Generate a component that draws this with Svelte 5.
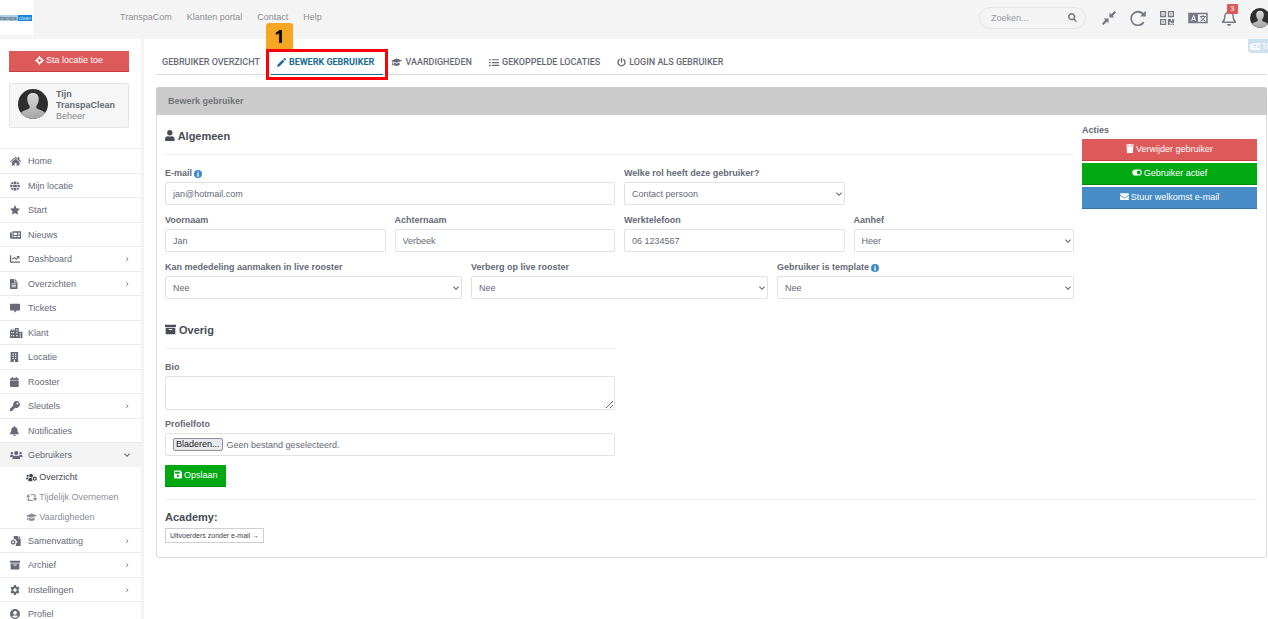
<script>
    // Icons: [viewBox width, viewBox height, path]
    const icons = {
        crosshair: [16, 16, 'M7 0h2v2.100A6 6 0 0 1 13.900 7H16v2h-2.100A6 6 0 0 1 9 13.900V16H7v-2.100A6 6 0 0 1 2.100 9H0V7h2.100A6 6 0 0 1 7 2.100zM8 5.500a2.500 2.500 0 1 0 0 5a2.500 2.500 0 0 0 0-5z'],
        home: [18, 16, 'M9 1L0 8.600l1 1.200L9 3.200l8 6.600l1-1.200l-3-2.500V1.500h-2.300v2.700zM9 4.500L3 9.500V15h4.500v-4h3v4H15V9.500z'],
        globe: [16, 16, 'M5.300 5.300h5.400C10.200 2 9 .3 8 .3S5.800 2 5.300 5.300zM5.100 6.300a17 17 0 0 0 0 3.400h5.800a17 17 0 0 0 0-3.400zM11.700 5.300h3.600A7.800 7.800 0 0 0 10.200.600c.8 1.200 1.300 3 1.500 4.700zM4.300 5.300C4.500 3.600 5 1.800 5.800.600A7.800 7.800 0 0 0 .7 5.300zM15.600 6.300h-3.700a18 18 0 0 1 0 3.400h3.700a8 8 0 0 0 0-3.400zM4 6.300H.4a8 8 0 0 0 0 3.400H4a18 18 0 0 1 0-3.400zM5.300 10.700c.5 3.300 1.700 5 2.700 5s2.200-1.700 2.700-5zM11.700 10.700c-.2 1.700-.7 3.500-1.500 4.700a7.800 7.800 0 0 0 5.100-4.700zM.7 10.700a7.800 7.800 0 0 0 5.100 4.700c-.8-1.200-1.300-3-1.500-4.700z'],
        star: [16, 16, 'M8 0l2.400 5.200l5.600.7l-4.100 3.900l1 5.700L8 12.800l-4.900 2.700l1-5.700L0 5.900l5.600-.7z'],
        news: [18, 16, 'M4 2h14v12H2a2 2 0 0 1-2-2V4h3v8h1zM6 4.500v3.500h5V4.500zM12.500 4.500V6H16V4.500zM12.500 7v1.300H16V7zM6 9.500V11h4.500V9.500zM12 9.500V11h4V9.500z'],
        chart: [16, 16, 'M0 2h2v10h14v2H0zM10 3h5v5l-1.700-1.700L10 9.600L7 6.700l-2.500 2.500L3.200 8L7 4.200l3 3L12 5z'],
        file: [12, 16, 'M0 1a1 1 0 0 1 1-1h6v5h5v10a1 1 0 0 1-1 1H1a1 1 0 0 1-1-1zM8 0l4 4H8zM2.500 7v1.200h7V7zM2.500 9.500v1.200h7V9.500zM2.500 12v1.200h7V12z'],
        chat: [16, 16, 'M1.500 1h13A1.500 1.500 0 0 1 16 2.500v8a1.500 1.500 0 0 1-1.500 1.500H11l-4 3.500V12H1.500A1.500 1.500 0 0 1 0 10.500v-8A1.500 1.500 0 0 1 1.500 1z'],
        city: [20, 16, 'M0 4h2V1h1.500v3h2V1H7v3h1V0h6v6h5a1 1 0 0 1 1 1v9H0zM2 6.500v2h1.500v-2zM2 11v2h1.500v-2zM5 6.500v2h1.500v-2zM5 11v2h1.500v-2zM10 2v2h2V2zM10 6.500v2h2v-2zM10 11v2h2v-2zM15.500 8.500v2h2v-2zM15.500 12v2h2v-2z'],
        building: [14, 16, 'M1 0h12v15h1v1H8v-3.500H6V16H0v-1h1zM4 2.500v2h2v-2zM8 2.500v2h2v-2zM4 6v2h2V6zM8 6v2h2V6zM4 9.500v1.500h2V9.500zM8 9.500v1.500h2V9.500z'],
        calendar: [14, 16, 'M3 0h2v2h4V0h2v2h1.500A1.500 1.500 0 0 1 14 3.500V5H0V3.500A1.500 1.500 0 0 1 1.500 2H3zM0 6h14v8.500a1.500 1.500 0 0 1-1.500 1.500h-11A1.500 1.500 0 0 1 0 14.500z'],
        key: [16, 16, 'M10.500 0a5.500 5.500 0 1 1-1.600 10.800L7.500 12H6v2H4v2H0v-3.500l5.300-5.300A5.500 5.500 0 0 1 10.500 0zM12 2.500a1.500 1.500 0 1 0 0 3a1.500 1.500 0 0 0 0-3z'],
        bell: [14, 16, 'M7 0a1 1 0 0 1 1 1v.7c2.500.5 4 2.300 4 5.300c0 3 2 3.500 2 5v1H0v-1c0-1.500 2-2 2-5c0-3 1.500-4.800 4-5.300V1a1 1 0 0 1 1-1zM5 14h4a2 2 0 0 1-4 0z'],
        users: [20, 16, 'M3 3a2 2 0 1 1 0 4a2 2 0 0 1 0-4zM17 3a2 2 0 1 1 0 4a2 2 0 0 1 0-4zM10 1.500a3.300 3.300 0 1 1 0 6.600a3.300 3.300 0 0 1 0-6.600zM2 8h2.500l1 .5L4 11H0v-1a2 2 0 0 1 2-2zM18 8h-2.500l-1 .5L16 11h4v-1a2 2 0 0 0-2-2zM7 9h6a3 3 0 0 1 3 3v2.500H4V12a3 3 0 0 1 3-3z'],
        usersCog: [20, 16, 'M3 3a2 2 0 1 1 0 4a2 2 0 0 1 0-4zM9 1.500a3.300 3.300 0 1 1 0 6.600a3.300 3.300 0 0 1 0-6.600zM2 8h2.500L3 11H0v-1a2 2 0 0 1 2-2zM6.500 9H10l1 2l-.5 1.500l1.500 2H4V12a3 3 0 0 1 2.500-3zM14.500 6h2l.4 1.500l1.500-.4l1 1.700l-1 1.200l1 1.200l-1 1.700l-1.500-.4l-.4 1.500h-2l-.4-1.500l-1.500.4l-1-1.700l1-1.200l-1-1.200l1-1.700l1.500.4zM15.500 8.500a1.500 1.500 0 1 0 0 3a1.500 1.500 0 0 0 0-3z'],
        retweet: [20, 16, 'M4 2l4 4.500H5V12h6l2 2H3V6.500H0zM7 2h10v7.500h3L16 14l-4-4.500h3V4H9z'],
        grad: [20, 16, 'M10 1l10 3.800L10 8.600L3 6v3l.8 4H1.200L2 9V5.500L0 4.800zM5 8l5 2l5-2l.6 4.200c-1 1.200-3 1.800-5.600 1.800s-4.600-.6-5.600-1.800z'],
        fileCog: [18, 16, 'M6 0h7v4h4v12H9V14l1-1v-2l2-1.500L10 7l-1-2H6zM14 0l3 3h-3zM4 6h2l.4 1.500l1.500-.4l1 1.700L8 10l1 1.200l-1 1.700l-1.600-.4L6 14H4l-.4-1.500l-1.500.4l-1-1.700L2 10L1 8.800l1-1.700l1.600.4zM5 8.500a1.500 1.500 0 1 0 0 3a1.500 1.500 0 0 0 0-3z'],
        archive: [16, 16, 'M0 1h16v3.500H0zM1 5.500h14V15H1zM5.500 7.200v1.600h5V7.200z'],
        cog: [16, 16, 'M6.500 0h3l.5 2.200l1.600.9l2.100-.7l1.500 2.600L13.600 6.500a6 6 0 0 1 0 3L15.200 11l-1.500 2.600l-2.100-.7l-1.600.9L9.500 16h-3L6 13.800l-1.600-.9l-2.100.7L.8 11l1.600-1.500a6 6 0 0 1 0-3L.8 5l1.500-2.600l2.100.7L6 2.200zM8 5.300a2.700 2.700 0 1 0 0 5.400a2.700 2.700 0 0 0 0-5.400z'],
        profile: [16, 16, 'M8 0a8 8 0 1 1 0 16A8 8 0 0 1 8 0zM8 3a3 3 0 1 0 0 6a3 3 0 0 0 0-6zM8 14c2 0 3.600-.8 4.700-2.300c-.6-1-1.700-1.500-2.700-1.500H6c-1 0-2.100.500-2.700 1.500C4.400 13.200 6 14 8 14z'],
        pencil: [16, 16, 'M12.500.500a1.500 1.500 0 0 1 2 0l1 1a1.500 1.500 0 0 1 0 2L14 5l-3-3zM10 3l3 3l-8.500 8.700L0 16l1.300-4.500z'],
        list: [18, 16, 'M0 2h3v2.500H0zM5 2h13v2.200H5zM0 7h3v2.500H0zM5 7h13v2.200H5zM0 12h3v2.500H0zM5 12h13v2.200H5z'],
        power: [16, 16, 'M6.800 0h2.400v8H6.800zM4 1.500l1.300 2a5 5 0 1 0 5.400 0l1.300-2A7.400 7.400 0 1 1 4 1.500z'],
        user: [448, 512, 'M224 256c70.700 0 128-57.300 128-128S294.700 0 224 0 96 57.300 96 128s57.300 128 128 128zm89.600 32h-16.700c-22.200 10.200-46.900 16-72.900 16s-50.600-5.800-72.900-16h-16.700C60.200 288 0 348.200 0 422.400V464c0 26.500 21.500 48 48 48h352c26.500 0 48-21.500 48-48v-41.600c0-74.200-60.200-134.400-134.400-134.400z'],
        info: [16, 16, 'M8 0a8 8 0 1 1 0 16A8 8 0 0 1 8 0zM6.800 2.800v2.400h2.600V2.800zM6 6.500v1.300h1v3.700H6v1.300h4v-1.300H9.300v-5z'],
        trash: [14, 16, 'M0 1h4.500L5 0h4l.5 1H14v2H0zM1 4h12l-.7 11a1 1 0 0 1-1 1H2.700a1 1 0 0 1-1-1z'],
        toggle: [18, 16, 'M6 2.500h6a5.500 5.500 0 0 1 0 11H6a5.500 5.500 0 0 1 0-11zM12 4.500a3.500 3.500 0 1 0 0 7a3.500 3.500 0 0 0 0-7z'],
        mail: [16, 16, 'M1.500 2h13A1.500 1.500 0 0 1 16 3.500V5L8 10L0 5V3.500A1.500 1.500 0 0 1 1.500 2zM0 6.500l8 5l8-5v6a1.500 1.500 0 0 1-1.500 1.500h-13A1.500 1.500 0 0 1 0 12.500z'],
        save: [14, 16, 'M1.500 1H11l3 3v9.500a1.500 1.500 0 0 1-1.500 1.500h-11A1.500 1.500 0 0 1 0 13.500v-11A1.500 1.500 0 0 1 1.500 1zM2 3v3.500h8V3zM7 8.500a2 2 0 1 0 0 4a2 2 0 0 0 0-4z'],
        search: [16, 16, 'M6.500 0a6.500 6.500 0 0 1 5.200 10.300l4.300 4.200l-1.700 1.700l-4.200-4.300A6.500 6.500 0 1 1 6.500 0zM6.500 2.600a3.900 3.900 0 1 0 0 7.800a3.900 3.900 0 0 0 0-7.800z'],
        compress: [16, 16, 'M8.500 7.500V1.800l1.800 1.800L14.500 0L16 1.500l-3.600 4.200l1.800 1.800zM7.500 8.500v5.700l-1.800-1.800L1.500 16L0 14.500l3.600-4.200l-1.800-1.800z'],
        reload: [16, 16, 'M15.800.8v5.700h-5.700l2-2A5.900 5.900 0 1 0 13 11.500l1.500 1.200A7.700 7.700 0 1 1 13.500 3.100z'],
        qr: [16, 16, 'M0 0h7v7H0zM1.500 1.500v4h4v-4zM2.800 2.800h1.400v1.400H2.800zM9 0h7v7H9zM10.500 1.500v4h4v-4zM11.800 2.800h1.400v1.400h-1.400zM0 9h7v7H0zM1.500 10.500v4h4v-4zM2.800 11.800h1.400v1.400H2.800zM9 9h3.500v2H14V9h2v5h-3v-1.500h-2V16H9zM12 14.500h1.500V16H12zM14.500 14.800H16V16h-1.500z'],
        bellLine: [14, 16, 'M7 0a1 1 0 0 1 1 1v.7c2.500.5 4 2.300 4 5.300c0 3 2 3.500 2 5v1H0v-1c0-1.500 2-2 2-5c0-3 1.500-4.800 4-5.300V1a1 1 0 0 1 1-1zM7 3C4.500 3 3.500 4.500 3.500 7c0 2.500-.8 3.500-1.500 4.500h10c-.7-1-1.500-2-1.500-4.500c0-2.500-1-4-3.500-4zM5 14h4a2 2 0 0 1-4 0z'],
        right: [8, 16, 'M1.500 3l5 5l-5 5l-1.200-1.200L4 8L.3 4.200z'],
        down: [16, 16, 'M2 3.500L8 9.500l6-6L16 5.500L8 13.500L0 5.500z']
    };

    const topLinks = ['TranspaCom', 'Klanten portal', 'Contact', 'Help'];

    const menu = [
        { label: 'Home', icon: 'home' },
        { label: 'Mijn locatie', icon: 'globe' },
        { label: 'Start', icon: 'star' },
        { label: 'Nieuws', icon: 'news' },
        { label: 'Dashboard', icon: 'chart', more: true },
        { label: 'Overzichten', icon: 'file', more: true },
        { label: 'Tickets', icon: 'chat' },
        { label: 'Klant', icon: 'city' },
        { label: 'Locatie', icon: 'building' },
        { label: 'Rooster', icon: 'calendar' },
        { label: 'Sleutels', icon: 'key', more: true },
        { label: 'Notificaties', icon: 'bell' },
        {
            label: 'Gebruikers',
            icon: 'users',
            more: true,
            children: [
                { label: 'Overzicht', icon: 'usersCog', active: true },
                { label: 'Tijdelijk Overnemen', icon: 'retweet' },
                { label: 'Vaardigheden', icon: 'grad' }
            ]
        },
        { label: 'Samenvatting', icon: 'fileCog', more: true },
        { label: 'Archief', icon: 'archive', more: true },
        { label: 'Instellingen', icon: 'cog', more: true },
        { label: 'Profiel', icon: 'profile' }
    ];

    const tabs = [
        { label: 'Gebruiker overzicht' },
        { label: 'Bewerk gebruiker', icon: 'pencil', active: true },
        { label: 'Vaardigheden', icon: 'grad' },
        { label: 'Gekoppelde locaties', icon: 'list' },
        { label: 'Login als gebruiker', icon: 'power' }
    ];

    let zoek = $state('');
    let bestand = $state('');
    let user = $state({
        email: 'jan@hotmail.com',
        rol: 'Contact persoon',
        voornaam: 'Jan',
        achternaam: 'Verbeek',
        telefoon: '06 1234567',
        aanhef: 'Heer',
        mededeling: 'Nee',
        verberg: 'Nee',
        template: 'Nee',
        bio: ''
    });
</script>

{#snippet icon(name)}
    <svg class="icon" viewBox="0 0 {icons[name][0]} {icons[name][1]}" aria-hidden="true">
        <path d={icons[name][2]} fill="currentColor" fill-rule="evenodd" />
    </svg>
{/snippet}

{#snippet avatar(id)}
    <svg class="avatar" viewBox="0 0 30 30" aria-hidden="true">
        <defs>
            <linearGradient id="{id}-g" x1="0" y1="0" x2="0" y2="1">
                <stop offset="0" stop-color="#d8d8d8" />
                <stop offset="1" stop-color="#a4a4a4" />
            </linearGradient>
            <clipPath id="{id}-c"><circle cx="15" cy="15" r="15" /></clipPath>
        </defs>
        <g clip-path="url(#{id}-c)">
            <rect width="30" height="30" fill="#2e2e2e" />
            <path fill="url(#{id}-g)" d="M15 4c4 0 6 2.700 5.700 6.500c-.1 3-1.200 5-2.300 6.500v2c1 1.700 6.500 1.800 8.600 5V30H3v-6c2.100-3.200 7.600-3.300 8.600-5v-2c-1.100-1.500-2.200-3.500-2.300-6.500C9 6.700 11 4 15 4z" />
        </g>
    </svg>
{/snippet}

{#snippet keuze(id, veld, opties)}
    <div class="select">
        <select {id} bind:value={user[veld]}>
            {#each opties as optie}<option>{optie}</option>{/each}
        </select>
        {@render icon('down')}
    </div>
{/snippet}

<div class="app">
    <header class="topbar">
        <a href="#home" class="logo"><span class="logo-a">transpa</span><span class="logo-b">clean</span></a>
        <nav class="top-links">
            {#each topLinks as link}<a href="#top">{link}</a>{/each}
        </nav>
        <div class="tools">
            <label class="search">
                <input type="text" placeholder="Zoeken..." aria-label="Zoeken" bind:value={zoek}>
                {@render icon('search')}
            </label>
            <button class="tool" aria-label="Verkleinen">{@render icon('compress')}</button>
            <button class="tool large" aria-label="Vernieuwen">{@render icon('reload')}</button>
            <button class="tool" aria-label="QR-code">{@render icon('qr')}</button>
            <button class="tool" aria-label="Taal">
                <svg class="lang-icon" viewBox="0 0 20 11" aria-hidden="true">
                    <rect x="1" y="1" width="18" height="9" fill="none" stroke="currentColor" stroke-width="1.500" />
                    <rect x="1" y="1" width="9" height="9" fill="currentColor" />
                    <path d="M3.500 8.500L5.600 3l2.100 5.500M4.200 7h2.800" fill="none" stroke="#f4f4f4" />
                    <path d="M12 4h6M15 2.500V4M17 4c-.5 2-2.500 3.500-4.500 4.500M13 4.500c.5 1.500 2.500 3 4.500 4" fill="none" stroke="currentColor" />
                </svg>
            </button>
            <button class="tool large" aria-label="Meldingen">
                {@render icon('bellLine')}
                <span class="count">3</span>
            </button>
            <a href="#profiel" class="me" aria-label="Profiel">{@render avatar('top')}</a>
        </div>
    </header>

    <aside class="sidebar">
        <button class="btn red">{@render icon('crosshair')} Sta locatie toe</button>
        <div class="user-card">
            {@render avatar('side')}
            <div>
                <strong>Tijn TranspaClean</strong>
                <span>Beheer</span>
            </div>
        </div>
        <ul class="menu">
            {#each menu as item}
                <li>
                    <a href="#menu" class="menu-link" class:open={item.children}>
                        <span class="menu-icon">{@render icon(item.icon)}</span>
                        <span class="menu-label">{item.label}</span>
                        {#if item.more}
                            <span class="arrow">{@render icon(item.children ? 'down' : 'right')}</span>
                        {/if}
                    </a>
                    {#if item.children}
                        <ul class="submenu">
                            {#each item.children as child}
                                <li><a href="#menu" class:active={child.active}>{@render icon(child.icon)} {child.label}</a></li>
                            {/each}
                        </ul>
                    {/if}
                </li>
            {/each}
        </ul>
    </aside>

    <main>
        <a href="#taken" class="task-tag">{@render icon('news')} Taken</a>
        <nav class="tabs">
            {#each tabs as tab}
                <a href="#tab" class="tab" class:active={tab.active}>
                    {#if tab.icon}{@render icon(tab.icon)}{/if}
                    {tab.label}
                    {#if tab.active}
                        <span class="marker"><span class="step">1</span></span>
                    {/if}
                </a>
            {/each}
        </nav>

        <section class="panel">
            <div class="panel-title">Bewerk gebruiker</div>
            <div class="panel-body">
                <div class="columns">
                    <form>
                        <h3>{@render icon('user')} Algemeen</h3>
                        <div class="fields">
                            <div class="field w6">
                                <label for="email">E-mail <span class="hint">{@render icon('info')}</span></label>
                                <input type="text" id="email" bind:value={user.email}>
                            </div>
                            <div class="field w3">
                                <label for="rol">Welke rol heeft deze gebruiker?</label>
                                {@render keuze('rol', 'rol', ['Contact persoon', 'Medewerker', 'Beheer'])}
                            </div>
                            <div class="field w3 first">
                                <label for="voornaam">Voornaam</label>
                                <input type="text" id="voornaam" bind:value={user.voornaam}>
                            </div>
                            <div class="field w3">
                                <label for="achternaam">Achternaam</label>
                                <input type="text" id="achternaam" bind:value={user.achternaam}>
                            </div>
                            <div class="field w3">
                                <label for="telefoon">Werktelefoon</label>
                                <input type="text" id="telefoon" bind:value={user.telefoon}>
                            </div>
                            <div class="field w3">
                                <label for="aanhef">Aanhef</label>
                                {@render keuze('aanhef', 'aanhef', ['Heer', 'Mevrouw'])}
                            </div>
                            <div class="field w4">
                                <label for="mededeling">Kan mededeling aanmaken in live rooster</label>
                                {@render keuze('mededeling', 'mededeling', ['Nee', 'Ja'])}
                            </div>
                            <div class="field w4">
                                <label for="verberg">Verberg op live rooster</label>
                                {@render keuze('verberg', 'verberg', ['Nee', 'Ja'])}
                            </div>
                            <div class="field w4">
                                <label for="template">Gebruiker is template <span class="hint">{@render icon('info')}</span></label>
                                {@render keuze('template', 'template', ['Nee', 'Ja'])}
                            </div>
                        </div>

                        <div class="fields extra">
                            <div class="w6">
                                <h3>{@render icon('archive')} Overig</h3>
                                <div class="field">
                                    <label for="bio">Bio</label>
                                    <textarea id="bio" bind:value={user.bio}></textarea>
                                </div>
                                <div class="field foto">
                                    <label for="foto">Profielfoto</label>
                                    <label for="foto" class="file">
                                        <span class="browse">Bladeren...</span>
                                        {bestand || 'Geen bestand geselecteerd.'}
                                    </label>
                                    <input type="file" id="foto" class="file-input" bind:value={bestand}>
                                </div>
                                <button type="button" class="btn green">{@render icon('save')} Opslaan</button>
                            </div>
                        </div>
                    </form>

                    <div class="actions">
                        <strong>Acties</strong>
                        <button class="btn red">{@render icon('trash')} Verwijder gebruiker</button>
                        <button class="btn green">{@render icon('toggle')} Gebruiker actief</button>
                        <button class="btn blue">{@render icon('mail')} Stuur welkomst e-mail</button>
                    </div>
                </div>

                <div class="academy">
                    <h3>Academy:</h3>
                    <a href="#academy" class="academy-link">Uitvoerders zonder e-mail →</a>
                </div>
            </div>
        </section>
    </main>
</div>

<style>
    :global(body){
        margin: 0;
        background: #fff;
        font-family: "Liberation Sans", Arial, sans-serif;
        font-size: 9px;
        line-height: 12px;
        color: #656a76;
    }

    .app{
        display: grid;
        grid-template-columns: 144px minmax(0, 1fr);
        grid-template-rows: 39px minmax(0, 1fr);
        height: 100vh;
        overflow: hidden;
    }

    a{
        color: inherit;
        text-decoration: none;
    }

    button, input, select, textarea{
        font: inherit;
        color: inherit;
        box-sizing: border-box;
        margin: 0;
    }

    ul{
        list-style: none;
        margin: 0;
        padding: 0;
    }

    .icon{
        height: 9px;
        flex: none;
    }

    /* Topbar */
    .topbar{
        grid-column: 1 / -1;
        display: flex;
        align-items: flex-start;
        background: #f4f4f4;
        color: #8b8e96;
        overflow: hidden;
    }

    .logo{
        display: flex;
        align-items: center;
        width: 33px;
        height: 35px;
        background: #fff;
        font-size: 5px;
        line-height: 6px;
    }

    .logo-a{
        width: 18px;
        background: #a9cfe6;
        color: #3c4650;
    }

    .logo-b{
        width: 14px;
        background: #1583d8;
        color: #d8ecfb;
        text-align: center;
    }

    .top-links{
        display: flex;
        gap: 15px;
        margin-left: 87px;
        line-height: 34px;
    }

    .tools{
        display: flex;
        align-items: center;
        margin-left: auto;
        margin-right: -2px;
        height: 35px;
    }

    .search{
        display: flex;
        align-items: center;
        box-sizing: border-box;
        width: 107px;
        height: 22px;
        padding: 0 8px 0 11px;
        margin-right: 16px;
        border: 1px solid #e6e6e6;
        border-radius: 11px;
    }

    .search input{
        flex: 1;
        min-width: 0;
        padding: 0;
        border: 0;
        background: none;
        outline: none;
    }

    .search input::placeholder{
        color: #9a9ca2;
        opacity: 1;
    }

    .search .icon{
        color: #757984;
    }

    .tool{
        display: flex;
        position: relative;
        padding: 0;
        margin-right: 14px;
        border: 0;
        background: none;
        color: #757984;
    }

    .tool .icon{
        height: 14px;
    }

    .tool.large .icon{
        height: 16px;
    }

    .lang-icon{
        width: 20px;
        height: 12px;
    }

    .count{
        position: absolute;
        top: -6px;
        right: -2px;
        width: 11px;
        background: #dc5a5a;
        color: #fff;
        font-size: 7px;
        line-height: 10px;
        text-align: center;
        border-radius: 1px;
    }

    .avatar{
        width: 30px;
        height: 30px;
        flex: none;
    }

    .me, .me .avatar{
        display: block;
        width: 20px;
        height: 20px;
    }

    /* Sidebar */
    .sidebar{
        border-right: 3px solid #f4f4f4;
        overflow: hidden;
    }

    .btn{
        display: flex;
        align-items: center;
        justify-content: center;
        gap: 2px;
        height: 22px;
        padding: 0 9px 2px;
        border: 0;
        border-bottom: 1px solid;
        color: #fff;
    }

    .btn.red{
        background: #dc5a5a;
        border-color: #cc3a3a;
    }

    .btn.green{
        background: #00a912;
        border-color: #008a0c;
    }

    .btn.blue{
        background: #478cc7;
        border-color: #3473a8;
    }

    .sidebar > .btn{
        width: 120px;
        height: 21px;
        margin: 12px 9px 0;
    }

    .user-card{
        display: flex;
        gap: 8px;
        box-sizing: border-box;
        width: 120px;
        margin: 11px 9px 20px;
        padding: 5px 8px;
        border: 1px solid #e4e4e4;
        border-radius: 2px;
        background: #f6f6f6;
        line-height: 11px;
    }

    .user-card strong, .user-card span{
        display: block;
    }

    .user-card span{
        color: #83868e;
    }

    .menu > li{
        border-top: 1px solid #ebebeb;
    }

    .menu-link{
        display: flex;
        align-items: center;
        height: 24px;
        padding: 0 10px;
    }

    .menu > li:nth-child(even) > .menu-link{
        height: 23px;
    }

    .menu-link.open{
        background: #f4f4f4;
    }

    .menu-icon{
        display: flex;
        width: 18px;
    }

    .menu-icon .icon{
        height: 10px;
    }

    .menu-label{
        flex: 1;
    }

    .arrow{
        display: flex;
        justify-content: center;
        width: 8px;
    }

    .arrow .icon{
        height: 6px;
    }

    .submenu{
        padding-bottom: 1px;
    }

    .submenu a{
        display: flex;
        align-items: center;
        gap: 2px;
        height: 20px;
        padding-left: 26px;
        color: #8a8e98;
    }

    .submenu a.active{
        color: #40444e;
    }

    /* Inhoud */
    main{
        position: relative;
        padding: 0 1px 0 12px;
    }

    .task-tag{
        position: absolute;
        top: 0;
        right: -14px;
        display: flex;
        align-items: center;
        gap: 1px;
        width: 32px;
        height: 14px;
        padding-left: 2px;
        background: #cfe1f1;
        color: #fff;
        border-radius: 0 0 0 4px;
    }

    .tabs{
        display: flex;
        gap: 2px;
        margin-top: 11px;
        border-bottom: 1px solid #dcdcdc;
        font-family: Roboto, "Liberation Sans", sans-serif;
        font-weight: 500;
        text-transform: uppercase;
    }

    .tab{
        display: flex;
        align-items: center;
        gap: 3px;
        position: relative;
        height: 24px;
        padding: 0 9px 0 6px;
        margin-bottom: -1px;
        border-bottom: 1px solid transparent;
    }

    .tab.active{
        color: #1b6b93;
        border-color: #1b6b93;
        font-weight: 700;
    }

    .marker{
        position: absolute;
        inset: -1px -5px -6px;
        border: 3px solid #fb0007;
    }

    .step{
        position: absolute;
        left: -3px;
        bottom: 100%;
        width: 27px;
        margin-bottom: 3px;
        background: #f6a623;
        color: #000;
        border-radius: 3px 3px 0 0;
        font: 700 18px/26px "Open Sans", sans-serif;
        text-align: center;
    }

    .panel{
        margin-top: 12px;
        border: 1px solid #dcdcdc;
        border-radius: 3px;
    }

    .panel-title{
        margin: -1px -1px 0;
        padding-left: 12px;
        background: #cbcbcb;
        border-radius: 3px 3px 0 0;
        line-height: 28px;
        font-weight: 700;
        color: #70737a;
    }

    .panel-body{
        padding: 9px 9px 14px 8px;
    }

    .columns{
        display: flex;
        gap: 8px;
    }

    form{
        flex: 1;
        min-width: 0;
    }

    h3{
        display: flex;
        align-items: center;
        gap: 3px;
        height: 23px;
        margin: 0 0 12px;
        padding-bottom: 7px;
        border-bottom: 1px solid #f0f0f0;
        font-size: 11px;
        color: #484c56;
    }

    h3 .icon{
        height: 11px;
    }

    .fields{
        display: grid;
        grid-template-columns: repeat(12, minmax(0, 1fr));
        gap: 9px;
    }

    .w3{
        grid-column: span 3;
    }

    .w4{
        grid-column: span 4;
    }

    .w6{
        grid-column: span 6;
    }

    .first{
        grid-column: 1 / span 3;
    }

    .field{
        position: relative;
    }

    .field > label{
        display: flex;
        align-items: center;
        gap: 2px;
        height: 15px;
        padding-bottom: 3px;
        box-sizing: border-box;
        font-weight: 700;
    }

    .hint{
        display: flex;
        color: #3c8ac6;
        padding-top: 2px;
    }

    .hint .icon{
        height: 8px;
    }

    .field input, .field select, .field textarea, .field .file{
        display: block;
        width: 100%;
        height: 23px;
        padding: 0 7px;
        border: 1px solid #e2e2e2;
        border-radius: 2px;
        background: #fff;
        outline: none;
    }

    .select{
        position: relative;
    }

    .field select{
        appearance: none;
    }

    .select .icon{
        position: absolute;
        right: 3px;
        top: 9px;
        height: 6px;
        pointer-events: none;
    }

    .field textarea{
        height: 34px;
    }

    .field .file{
        display: flex;
        align-items: center;
        gap: 4px;
        font-weight: 400;
    }

    .field .file-input{
        position: absolute;
        inset: auto 0 0;
        opacity: 0;
    }

    .browse{
        padding: 0 2px;
        border: 1px solid #8f8f9d;
        border-radius: 2px;
        background: #e9e9ed;
        color: #1a1a1e;
        line-height: 11px;
    }

    .extra{
        margin-top: 19px;
    }

    .foto{
        margin: 8px 0 9px;
    }

    .actions{
        display: flex;
        flex-direction: column;
        gap: 2px;
        width: 175px;
    }

    .actions strong{
        line-height: 13px;
    }

    .academy{
        margin-top: 12px;
        border-top: 1px solid #f0f0f0;
    }

    .academy h3{
        height: 23px;
        margin: 5px 0 0;
        border: 0;
        padding: 0;
    }

    .academy-link{
        display: inline-block;
        padding: 0 4px;
        border: 1px solid #cfcfcf;
        font-size: 7px;
        line-height: 13px;
        color: #40444e;
    }
</style>
